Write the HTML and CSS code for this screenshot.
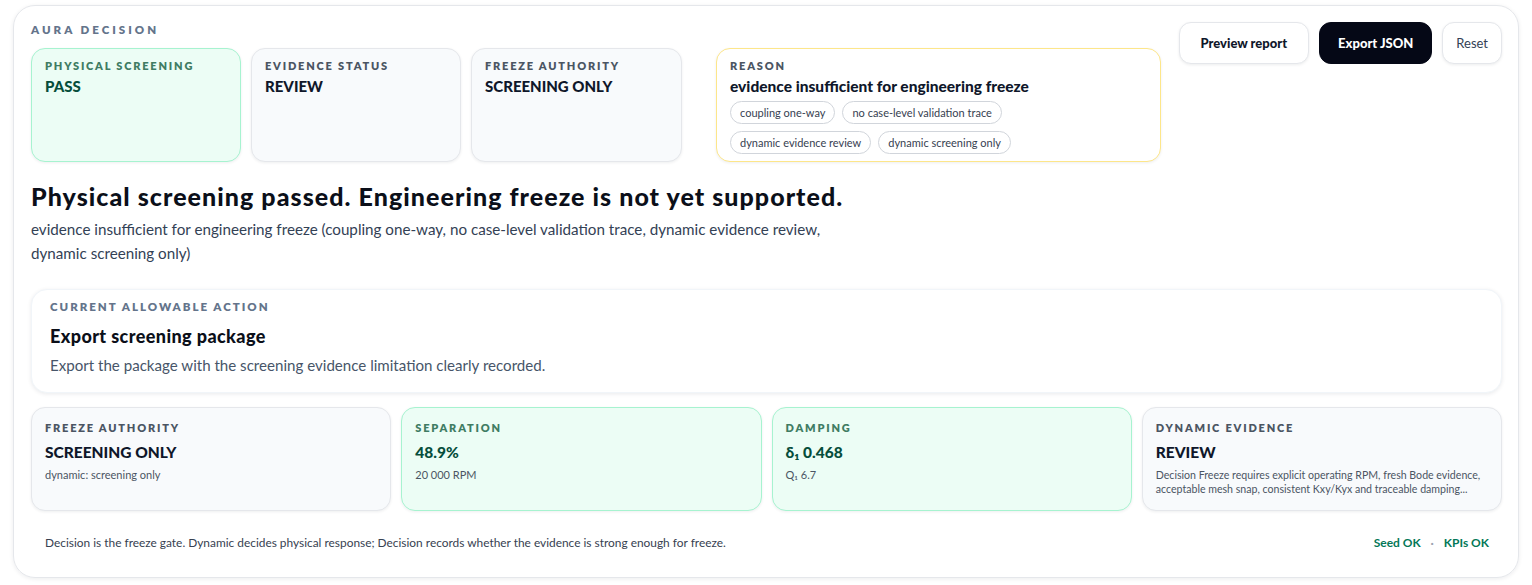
FILE: index.html
```html
<!DOCTYPE html>
<html>
<head>
    <title>Aura Decision</title>
    <link rel="stylesheet" href="styles.css">
</head>
<body>
    <div class="panel">
        <div class="top">
            <div class="top-main">
                <div class="eyebrow">AURA DECISION</div>
                <div class="status-row">
                    <div class="tile tile-green">
                        <div class="tile-label">PHYSICAL SCREENING</div>
                        <div class="tile-value">PASS</div>
                    </div>
                    <div class="tile tile-gray">
                        <div class="tile-label">EVIDENCE STATUS</div>
                        <div class="tile-value">REVIEW</div>
                    </div>
                    <div class="tile tile-gray">
                        <div class="tile-label">FREEZE AUTHORITY</div>
                        <div class="tile-value">SCREENING ONLY</div>
                    </div>
                    <div class="tile tile-reason">
                        <div class="tile-label">REASON</div>
                        <div class="reason-title">evidence insufficient for engineering freeze</div>
                        <div class="chips">
                            <span class="chip">coupling one-way</span>
                            <span class="chip">no case-level validation trace</span>
                            <span class="chip">dynamic evidence review</span>
                            <span class="chip">dynamic screening only</span>
                        </div>
                    </div>
                </div>
            </div>
            <div class="actions">
                <button class="btn btn-light">Preview report</button>
                <button class="btn btn-dark">Export JSON</button>
                <button class="btn btn-plain">Reset</button>
            </div>
        </div>

        <h1 class="headline">Physical screening passed. Engineering freeze is not yet supported.</h1>
        <p class="summary">evidence insufficient for engineering freeze (coupling one-way, no case-level validation trace, dynamic evidence review, dynamic screening only)</p>

        <div class="action-card">
            <div class="eyebrow eyebrow-sm">CURRENT ALLOWABLE ACTION</div>
            <div class="action-title">Export screening package</div>
            <div class="action-text">Export the package with the screening evidence limitation clearly recorded.</div>
        </div>

        <div class="kpi-row">
            <div class="kpi tile-gray">
                <div class="tile-label">FREEZE AUTHORITY</div>
                <div class="kpi-value">SCREENING ONLY</div>
                <div class="kpi-sub">dynamic: screening only</div>
            </div>
            <div class="kpi tile-green">
                <div class="tile-label">SEPARATION</div>
                <div class="kpi-value">48.9%</div>
                <div class="kpi-sub">20 000 RPM</div>
            </div>
            <div class="kpi tile-green">
                <div class="tile-label">DAMPING</div>
                <div class="kpi-value">δ₁ 0.468</div>
                <div class="kpi-sub">Q₁ 6.7</div>
            </div>
            <div class="kpi tile-gray">
                <div class="tile-label">DYNAMIC EVIDENCE</div>
                <div class="kpi-value">REVIEW</div>
                <div class="kpi-sub kpi-note">Decision Freeze requires explicit operating RPM, fresh Bode evidence, acceptable mesh snap, consistent Kxy/Kyx and traceable damping...</div>
            </div>
        </div>

        <div class="footer">
            <span>Decision is the freeze gate. Dynamic decides physical response; Decision records whether the evidence is strong enough for freeze.</span>
            <span class="checks">Seed OK <span class="dot">·</span> KPIs OK</span>
        </div>
    </div>
</body>
</html>
```

FILE: styles.css
```css
body { margin: 0; padding: 5px 13px 6px 13px; font-family: Lato, "Open Sans", sans-serif; color: #0f172a; background: #fff; }
.panel { border: 1px solid #e5e7eb; border-radius: 22px; box-shadow: 0 1px 4px rgba(15, 23, 42, 0.08); padding: 16px 16px 27px 17px; }

.top { display: flex; justify-content: space-between; align-items: flex-start; }
.eyebrow { font-size: 11.5px; font-weight: 800; letter-spacing: 3px; color: #64748b; line-height: 16px; }
.status-row { display: grid; grid-template-columns: 210px 210px 211px 469px; column-gap: 10px; margin-top: 10px; }
.tile { border-radius: 14px; height: 114px; box-sizing: border-box; padding: 10px 13px; box-shadow: 0 1px 3px rgba(15, 23, 42, 0.07); }
.tile-green { background: #ecfdf5; border: 1px solid #a7f3d0; }
.tile-gray { background: #f8fafc; border: 1px solid #e5e7eb; }
.tile-reason { background: #fff; border: 1px solid #fde68a; margin-left: 24px; }
.tile-label { font-size: 11px; font-weight: 800; letter-spacing: 1.8px; color: #4b5563; line-height: 14px; }
.tile-green .tile-label { color: #3f7c63; }
.tile-value { font-size: 15px; font-weight: 900; margin-top: 3px; line-height: 20px; color: #0f172a; }
.tile-green .tile-value, .tile-green .kpi-value { color: #064e3b; }
.reason-title { font-size: 15.5px; font-weight: 900; margin-top: 3px; line-height: 20px; color: #0f172a; }
.chips { display: flex; flex-wrap: wrap; gap: 7px; margin-top: 5px; }
.chip { font-size: 11px; color: #374151; border: 1px solid #d1d5db; border-radius: 999px; padding: 0 9px; line-height: 21px; }

.actions { display: flex; gap: 10px; }
.btn { font-family: inherit; font-size: 13px; height: 42px; border-radius: 12px; padding: 0 17px; cursor: pointer; }
.btn-light { background: #fff; border: 1px solid #e5e7eb; font-weight: 900; color: #0f172a; padding: 0 21px; box-shadow: 0 1px 3px rgba(15, 23, 42, 0.08); }
.btn-dark { background: #050816; border: 1px solid #050816; color: #fff; font-weight: 900; padding: 0 18px; }
.btn-plain { background: #fff; border: 1px solid #e5e7eb; color: #334155; padding: 0 13px; box-shadow: 0 1px 3px rgba(15, 23, 42, 0.08); }

.headline { font-size: 25px; font-weight: 900; margin: 19px 0 0 0; line-height: 30px; color: #0b0f19; letter-spacing: 1.05px; }
.summary { font-size: 15.2px; color: #334155; line-height: 24px; margin: 6px 0 0 0; max-width: 815px; }

.action-card { margin-top: 24px; background: #fff; border: 1px solid #f1f5f9; border-radius: 16px; box-shadow: 0 1px 4px rgba(15, 23, 42, 0.09); padding: 9px 18px 17px 18px; }
.eyebrow-sm { font-size: 11.5px; letter-spacing: 2px; }
.action-title { font-size: 18px; font-weight: 900; margin-top: 10px; color: #0b0f19; line-height: 22px; letter-spacing: 0.4px; }
.action-text { font-size: 15.1px; color: #475569; margin-top: 8px; line-height: 20px; }

.kpi-row { display: grid; grid-template-columns: repeat(4, 1fr); gap: 10px; margin-top: 14px; }
.kpi { border-radius: 14px; height: 104px; box-sizing: border-box; padding: 13px 12px 0 13px; box-shadow: 0 1px 3px rgba(15, 23, 42, 0.07); min-width: 0; }
.kpi-value { font-size: 15.5px; font-weight: 900; margin-top: 7px; line-height: 20px; color: #0f172a; }
.kpi-sub { font-size: 11px; color: #4b5563; margin-top: 6px; line-height: 14px; }
.kpi-note { font-size: 10.6px; }

.footer { display: flex; justify-content: space-between; align-items: center; margin-top: 24px; padding: 0 13px 0 14px; font-size: 11.9px; color: #374151; }
.checks { color: #047857; font-size: 12px; font-weight: 700; }
.dot { color: #9ca3af; margin: 0 7px; }
```
